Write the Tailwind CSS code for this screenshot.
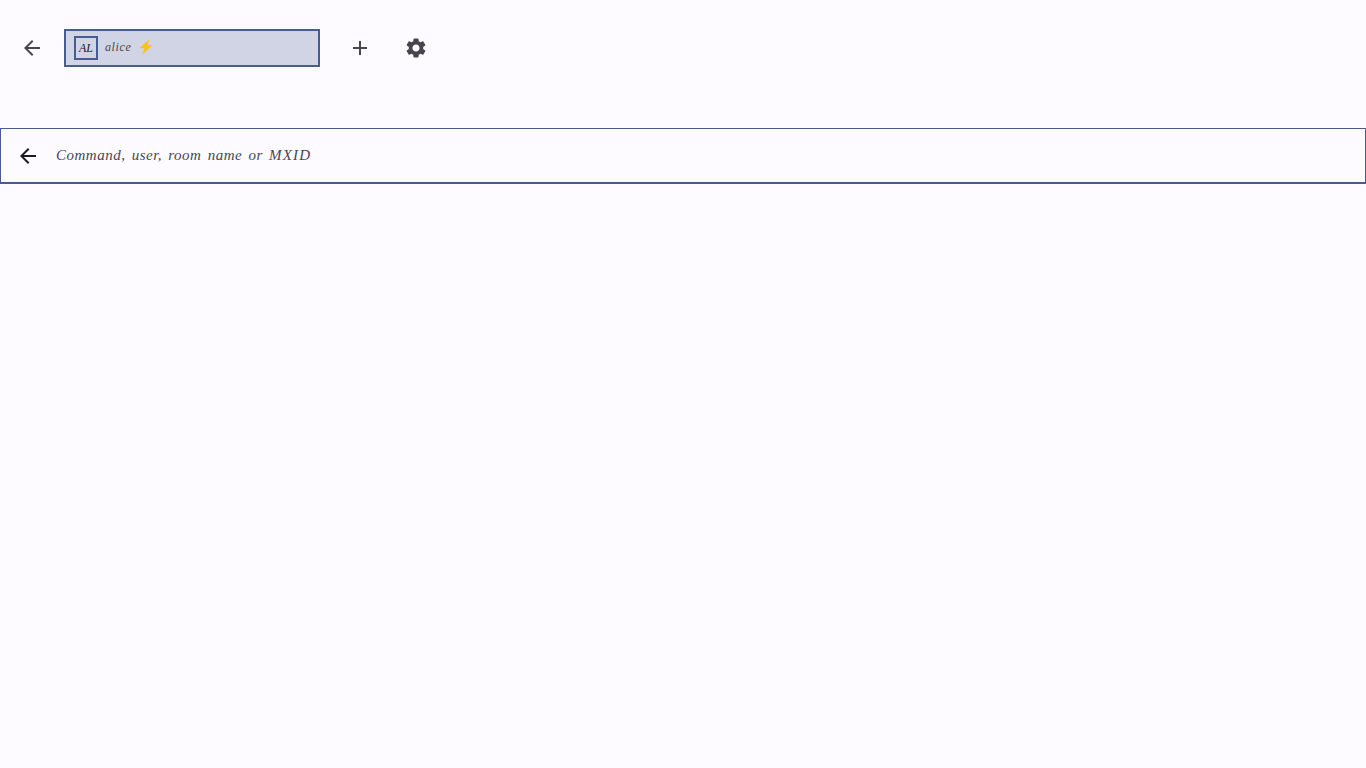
<!DOCTYPE html>
<html lang="en">
<head>
<meta charset="utf-8">
<title>Search</title>
<script src="https://cdn.jsdelivr.net/npm/@tailwindcss/browser@4"></script>
</head>
<body class="m-0 h-[768px] w-[1366px] overflow-hidden bg-[#fdfbff] font-['Liberation_Serif',cursive] italic text-[#1c1b1f]">
  <header class="flex h-[96px] items-center pl-[8px]">
    <button class="flex h-[48px] w-[48px] items-center justify-center text-[#47464f]">
      <svg class="h-[24px] w-[24px]" viewBox="0 0 24 24" fill="currentColor"><path d="M20 11H7.83l5.59-5.59L12 4l-8 8 8 8 1.41-1.41L7.83 13H20v-2z"/></svg>
    </button>
    <div class="ml-[8px] flex h-[38px] w-[256px] items-center border-2 border-[#475d92] bg-[#d0d4e4] pl-[8px]">
      <div class="flex h-[24px] w-[24px] items-center justify-center border-2 border-[#475d92] text-[12px] text-[#1c1b1f]">AL</div>
      <span class="mb-[2px] ml-[7px] text-[12px] tracking-[0.6px] text-[#47464f]">alice</span>
      <svg class="mb-[2px] ml-[7px] h-[16px] w-[16px]" viewBox="0 0 16 16"><path fill="#fcc21b" d="M11.5 0 1.5 8.9l5 .5L3.8 16 14.5 6.2l-5-.4z"/></svg>
    </div>
    <button class="ml-[16px] flex h-[48px] w-[48px] items-center justify-center text-[#47464f]">
      <svg class="h-[24px] w-[24px]" viewBox="0 0 24 24" fill="currentColor"><path d="M19 13h-6v6h-2v-6H5v-2h6V5h2v6h6v2z"/></svg>
    </button>
    <button class="ml-[8px] flex h-[48px] w-[48px] items-center justify-center text-[#47464f]">
      <svg class="h-[24px] w-[24px]" viewBox="0 0 24 24" fill="currentColor"><path d="M19.14 12.94c.04-.3.06-.61.06-.94 0-.32-.02-.64-.07-.94l2.03-1.58a.49.49 0 0 0 .12-.61l-1.92-3.32a.488.488 0 0 0-.59-.22l-2.39.96c-.5-.38-1.03-.7-1.62-.94l-.36-2.54a.484.484 0 0 0-.48-.41h-3.84c-.24 0-.43.17-.47.41l-.36 2.54c-.59.24-1.13.57-1.62.94l-2.39-.96c-.22-.08-.47 0-.59.22L2.74 8.87c-.12.21-.08.47.12.61l2.03 1.58c-.05.3-.09.63-.09.94s.02.64.07.94l-2.03 1.58a.49.49 0 0 0-.12.61l1.92 3.32c.12.22.37.29.59.22l2.39-.96c.5.38 1.03.7 1.62.94l.36 2.54c.05.24.24.41.48.41h3.84c.24 0 .44-.17.47-.41l.36-2.54c.59-.24 1.13-.56 1.62-.94l2.39.96c.22.08.47 0 .59-.22l1.92-3.32c.12-.22.07-.47-.12-.61l-2.01-1.58zM12 15.6c-1.98 0-3.6-1.62-3.6-3.6s1.62-3.6 3.6-3.6 3.6 1.62 3.6 3.6-1.62 3.6-3.6 3.6z"/></svg>
    </button>
  </header>
  <div class="mt-[32px] flex h-[56px] w-[1366px] items-center border border-b-2 border-[#475d92] pl-[15px]">
    <svg class="h-[24px] w-[24px] text-[#1c1b1f]" viewBox="0 0 24 24" fill="currentColor"><path d="M20 11H7.83l5.59-5.59L12 4l-8 8 8 8 1.41-1.41L7.83 13H20v-2z"/></svg>
    <span class="ml-[16px] text-[15px] tracking-[0.5px] [word-spacing:2px] text-[#47464f]">Command, user, room name or <span class="tracking-[1.2px]">MXID</span></span>
  </div>
</body>
</html>
